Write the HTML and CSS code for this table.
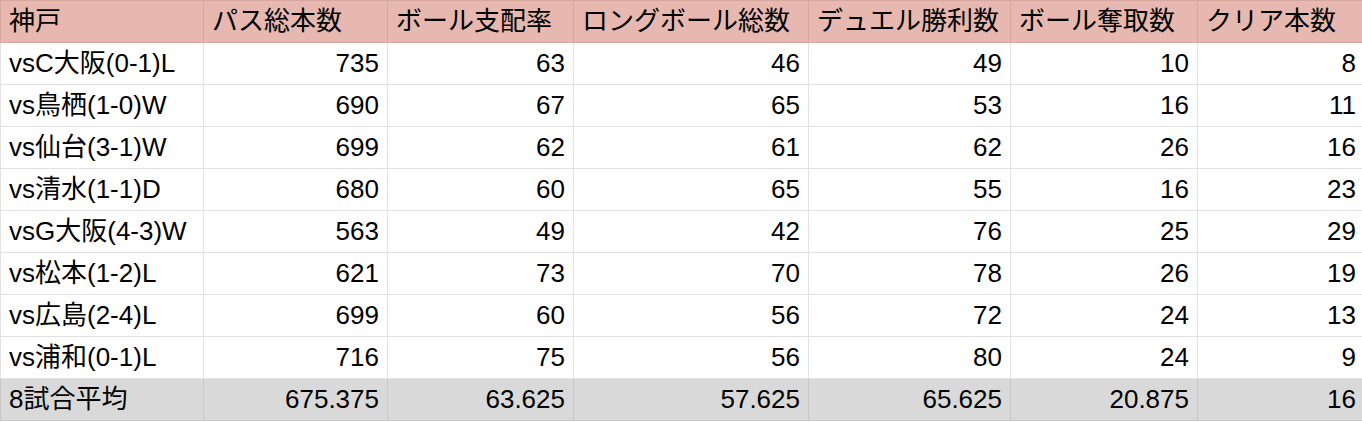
FILE: index.html
```html
<!DOCTYPE html>
<html lang="ja">
<head>
<meta charset="utf-8">
<title>神戸 スタッツ</title>
<link rel="stylesheet" href="styles.css">
</head>
<body>
<table class="sheet">
  <colgroup>
    <col class="c1"><col class="c2"><col class="c3"><col class="c4"><col class="c5"><col class="c6"><col class="c7">
  </colgroup>
  <thead>
    <tr class="head">
      <th>神戸</th><th>パス総本数</th><th>ボール支配率</th><th>ロングボール総数</th><th>デュエル勝利数</th><th>ボール奪取数</th><th>クリア本数</th>
    </tr>
  </thead>
  <tbody>
    <tr><td class="name">vsC大阪(0-1)L</td><td>735</td><td>63</td><td>46</td><td>49</td><td>10</td><td>8</td></tr>
    <tr><td class="name">vs鳥栖(1-0)W</td><td>690</td><td>67</td><td>65</td><td>53</td><td>16</td><td>11</td></tr>
    <tr><td class="name">vs仙台(3-1)W</td><td>699</td><td>62</td><td>61</td><td>62</td><td>26</td><td>16</td></tr>
    <tr><td class="name">vs清水(1-1)D</td><td>680</td><td>60</td><td>65</td><td>55</td><td>16</td><td>23</td></tr>
    <tr><td class="name">vsG大阪(4-3)W</td><td>563</td><td>49</td><td>42</td><td>76</td><td>25</td><td>29</td></tr>
    <tr><td class="name">vs松本(1-2)L</td><td>621</td><td>73</td><td>70</td><td>78</td><td>26</td><td>19</td></tr>
    <tr><td class="name">vs広島(2-4)L</td><td>699</td><td>60</td><td>56</td><td>72</td><td>24</td><td>13</td></tr>
    <tr><td class="name">vs浦和(0-1)L</td><td>716</td><td>75</td><td>56</td><td>80</td><td>24</td><td>9</td></tr>
  </tbody>
  <tfoot>
    <tr class="avg"><td class="name">8試合平均</td><td>675.375</td><td>63.625</td><td>57.625</td><td>65.625</td><td>20.875</td><td>16</td></tr>
  </tfoot>
</table>
</body>
</html>
```
FILE: styles.css
```css
html, body {
  margin: 0;
  padding: 0;
  background: #ffffff;
  overflow: hidden;
}

.sheet {
  border-collapse: collapse;
  table-layout: fixed;
  width: 1364px;
  font-family: "Liberation Sans", "Noto Sans CJK JP", sans-serif;
  font-size: 26px;
  color: #000;
}

.c1 { width: 203px; }
.c2 { width: 184px; }
.c3 { width: 186px; }
.c4 { width: 235px; }
.c5 { width: 202px; }
.c6 { width: 187px; }
.c7 { width: 167px; }

.sheet th,
.sheet td {
  height: 41px;
  padding: 0 8px 0 8px;
  box-sizing: border-box;
  white-space: nowrap;
  overflow: hidden;
  line-height: 41px;
}

.head th {
  background: #e6b8af;
  border: 1px solid #d6a79f;
  font-weight: normal;
  text-align: left;
  height: 42px;
}

tbody td {
  border: 1px solid #e2e2e2;
  text-align: right;
}

.sheet td.name {
  text-align: left;
}

.avg td {
  background: #d9d9d9;
  border: 1px solid #c8c8c8;
  text-align: right;
  height: 42px;
}
```
